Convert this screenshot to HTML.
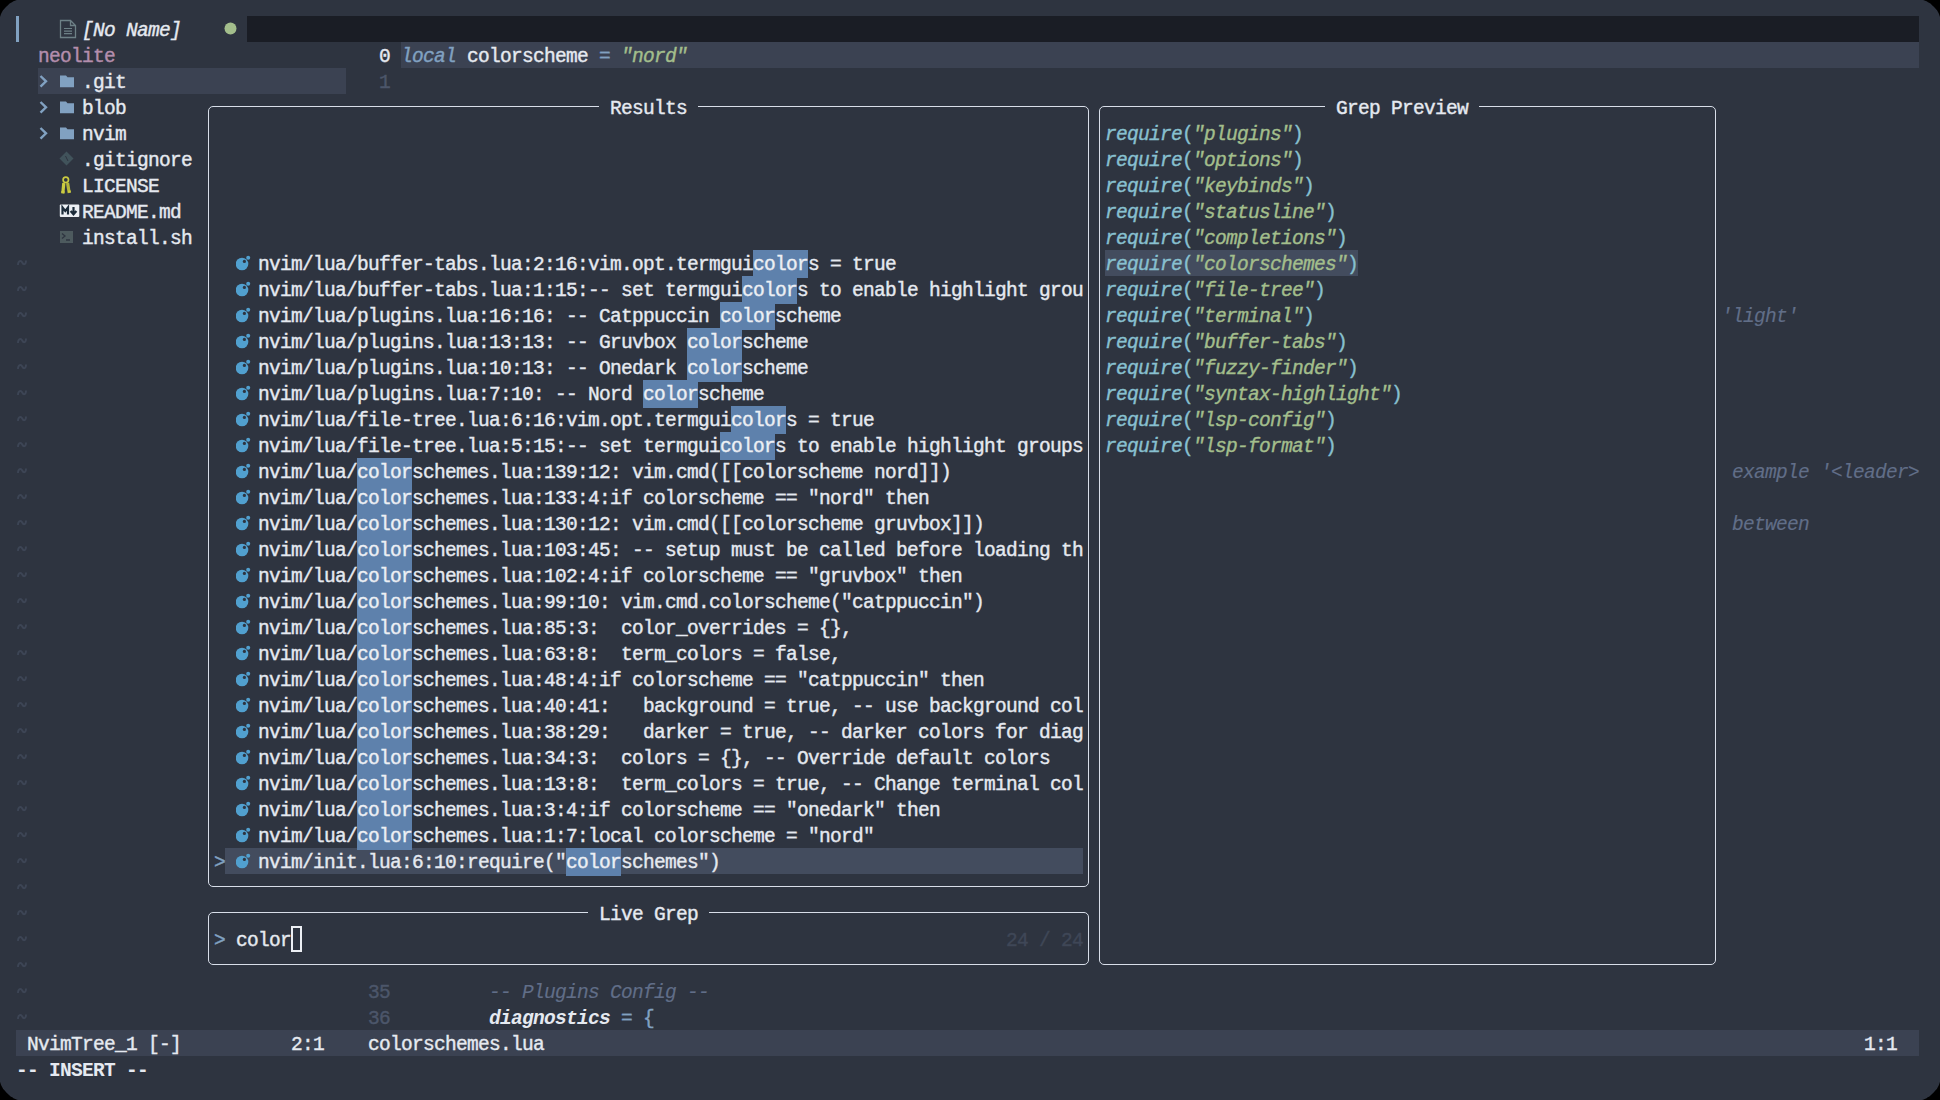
<!DOCTYPE html>
<html><head><meta charset="utf-8"><title>nvim</title><style>
html,body{margin:0;padding:0;width:1940px;height:1100px;overflow:hidden;background:#000}
#w{position:absolute;left:0;top:0;width:1940px;height:1100px;background:#2E3440;clip-path:polygon(0px 17px,1px 14px,2px 12.1px,3px 10.3px,4px 9.2px,5px 8.1px,6px 7px,7px 6.1px,8px 5.2px,9px 4.1px,10px 3.3px,11px 2.8px,12px 2.2px,13px 1.5px,14px 1.1px,15px 0.7px,16px 0.3px,17px 0px,1923px 0px,1924px 0.3px,1925px 0.7px,1926px 1.1px,1927px 1.5px,1928px 2.2px,1929px 2.8px,1930px 3.3px,1931px 4.1px,1932px 5.2px,1933px 6.1px,1934px 7px,1935px 8.1px,1936px 9.2px,1937px 10.3px,1938px 12.1px,1939px 14px,1940px 17px,1940px 1081.64px,1938.94px 1084.88px,1937.88px 1086.93px,1936.82px 1088.88px,1935.76px 1090.06px,1934.7px 1091.25px,1933.64px 1092.44px,1932.58px 1093.41px,1931.52px 1094.38px,1930.46px 1095.57px,1929.4px 1096.44px,1928.34px 1096.98px,1927.28px 1097.62px,1926.22px 1098.38px,1925.16px 1098.81px,1924.1px 1099.24px,1923.04px 1099.68px,1921.98px 1100px,18.02px 1100px,16.96px 1099.68px,15.9px 1099.24px,14.84px 1098.81px,13.78px 1098.38px,12.72px 1097.62px,11.66px 1096.98px,10.6px 1096.44px,9.54px 1095.57px,8.48px 1094.38px,7.42px 1093.41px,6.36px 1092.44px,5.3px 1091.25px,4.24px 1090.06px,3.18px 1088.88px,2.12px 1086.93px,1.06px 1084.88px,0px 1081.64px);overflow:hidden}
.r{position:absolute;display:block}
.t{position:absolute;height:26px;line-height:26px;font-family:"Liberation Mono",monospace;font-size:19.5px;letter-spacing:-0.702px;white-space:pre;-webkit-text-stroke:0.4px currentColor}
.i{font-style:italic}
.b{font-weight:bold;-webkit-text-stroke:0}
.c{-webkit-text-stroke:0.15px currentColor}
</style></head><body><div id="w">
<div class="r" style="left:16px;top:16px;width:3px;height:26px;background:#81A1C1;"></div>
<svg class="r" style="left:58px;top:18px" width="20" height="22" viewBox="0 0 20 22"><path d="M2.5 2.5 H12.5 L17.5 7.5 V19.5 H2.5 Z M12.5 2.5 V7.5 H17.5" fill="none" stroke="#6D8086" stroke-width="1.3"/><path d="M6 10.5H14M6 13.2H14M6 15.7H14" stroke="#6D8086" stroke-width="1.2"/></svg>
<div class="t i" style="left:82px;top:18px;color:#E5E9F0;">[No Name]</div>
<svg class="r" style="left:224px;top:22px" width="13" height="13" viewBox="0 0 13 13"><circle cx="6.5" cy="6.6" r="6" fill="#A3BE8C"/></svg>
<div class="r" style="left:247px;top:16px;width:1672px;height:26px;background:#1A1D25;"></div>
<div class="t" style="left:38px;top:44px;color:#B48EAD;">neolite</div>
<div class="r" style="left:38px;top:68px;width:308px;height:26px;background:#3B4252;"></div>
<svg class="r" style="left:38px;top:68px" width="12" height="26" viewBox="0 0 12 26"><path d="M2.5 8 L8 13.3 L2.5 18.6" fill="none" stroke="#81A1C1" stroke-width="2.4"/></svg>
<svg class="r" style="left:59px;top:68px" width="16" height="26" viewBox="0 0 16 26"><path d="M1 7.5 H7 L8.5 9.2 H15 V19.2 H1 Z" fill="#81A1C1"/></svg>
<div class="t" style="left:82px;top:70px;color:#E5E9F0;">.git</div>
<svg class="r" style="left:38px;top:94px" width="12" height="26" viewBox="0 0 12 26"><path d="M2.5 8 L8 13.3 L2.5 18.6" fill="none" stroke="#81A1C1" stroke-width="2.4"/></svg>
<svg class="r" style="left:59px;top:94px" width="16" height="26" viewBox="0 0 16 26"><path d="M1 7.5 H7 L8.5 9.2 H15 V19.2 H1 Z" fill="#81A1C1"/></svg>
<div class="t" style="left:82px;top:96px;color:#E5E9F0;">blob</div>
<svg class="r" style="left:38px;top:120px" width="12" height="26" viewBox="0 0 12 26"><path d="M2.5 8 L8 13.3 L2.5 18.6" fill="none" stroke="#81A1C1" stroke-width="2.4"/></svg>
<svg class="r" style="left:59px;top:120px" width="16" height="26" viewBox="0 0 16 26"><path d="M1 7.5 H7 L8.5 9.2 H15 V19.2 H1 Z" fill="#81A1C1"/></svg>
<div class="t" style="left:82px;top:122px;color:#E5E9F0;">nvim</div>
<svg class="r" style="left:58px;top:146px" width="17" height="26" viewBox="0 0 17 26"><path d="M8.5 5.5 L15.5 12.5 L8.5 19.5 L1.5 12.5 Z" fill="#41535B"/><path d="M7.5 10 L10 15" stroke="#2E3440" stroke-width="1"/></svg>
<div class="t" style="left:82px;top:148px;color:#E5E9F0;">.gitignore</div>
<svg class="r" style="left:58px;top:172px" width="16" height="26" viewBox="0 0 16 26"><circle cx="7.8" cy="7.8" r="2.7" fill="none" stroke="#CBCB41" stroke-width="1.7"/><path d="M5.8 11 L4.8 21.5" stroke="#CBCB41" stroke-width="3.2"/><path d="M9.6 11 L11.2 21" stroke="#B5B53A" stroke-width="3.2"/><path d="M3.4 20 H6.5 M10 19.5 H12.8" stroke="#CBCB41" stroke-width="1.8"/></svg>
<div class="t" style="left:82px;top:174px;color:#E5E9F0;">LICENSE</div>
<svg class="r" style="left:58px;top:198px" width="24" height="26" viewBox="0 0 24 26"><rect x="1.8" y="6.6" width="19.5" height="12.3" rx="1" fill="#ECEFF4"/><path d="M4.5 16.5 V9.5 L7.3 13 L10 9.5 V16.5" fill="none" stroke="#1c2b3a" stroke-width="2.2"/><path d="M15.5 9 V15.5 M12.6 13 L15.5 16.3 L18.4 13" fill="none" stroke="#1c2b3a" stroke-width="2.2"/></svg>
<div class="t" style="left:82px;top:200px;color:#E5E9F0;">README.md</div>
<svg class="r" style="left:58px;top:224px" width="17" height="26" viewBox="0 0 17 26"><rect x="2" y="7" width="13" height="12" fill="#4D5A5E"/><path d="M4 9.5 L7 12 L4 14.5 M8 16 H12" fill="none" stroke="#2E3440" stroke-width="1.3"/></svg>
<div class="t" style="left:82px;top:226px;color:#E5E9F0;">install.sh</div>
<svg class="r" style="left:16px;top:250px" width="11" height="26" viewBox="0 0 11 26"><path d="M2 15 C2 10.5, 5 10, 6.2 12.5 C7.4 15, 10 15, 10 10.5" fill="none" stroke="#3D4555" stroke-width="1.9"/></svg>
<svg class="r" style="left:16px;top:276px" width="11" height="26" viewBox="0 0 11 26"><path d="M2 15 C2 10.5, 5 10, 6.2 12.5 C7.4 15, 10 15, 10 10.5" fill="none" stroke="#3D4555" stroke-width="1.9"/></svg>
<svg class="r" style="left:16px;top:302px" width="11" height="26" viewBox="0 0 11 26"><path d="M2 15 C2 10.5, 5 10, 6.2 12.5 C7.4 15, 10 15, 10 10.5" fill="none" stroke="#3D4555" stroke-width="1.9"/></svg>
<svg class="r" style="left:16px;top:328px" width="11" height="26" viewBox="0 0 11 26"><path d="M2 15 C2 10.5, 5 10, 6.2 12.5 C7.4 15, 10 15, 10 10.5" fill="none" stroke="#3D4555" stroke-width="1.9"/></svg>
<svg class="r" style="left:16px;top:354px" width="11" height="26" viewBox="0 0 11 26"><path d="M2 15 C2 10.5, 5 10, 6.2 12.5 C7.4 15, 10 15, 10 10.5" fill="none" stroke="#3D4555" stroke-width="1.9"/></svg>
<svg class="r" style="left:16px;top:380px" width="11" height="26" viewBox="0 0 11 26"><path d="M2 15 C2 10.5, 5 10, 6.2 12.5 C7.4 15, 10 15, 10 10.5" fill="none" stroke="#3D4555" stroke-width="1.9"/></svg>
<svg class="r" style="left:16px;top:406px" width="11" height="26" viewBox="0 0 11 26"><path d="M2 15 C2 10.5, 5 10, 6.2 12.5 C7.4 15, 10 15, 10 10.5" fill="none" stroke="#3D4555" stroke-width="1.9"/></svg>
<svg class="r" style="left:16px;top:432px" width="11" height="26" viewBox="0 0 11 26"><path d="M2 15 C2 10.5, 5 10, 6.2 12.5 C7.4 15, 10 15, 10 10.5" fill="none" stroke="#3D4555" stroke-width="1.9"/></svg>
<svg class="r" style="left:16px;top:458px" width="11" height="26" viewBox="0 0 11 26"><path d="M2 15 C2 10.5, 5 10, 6.2 12.5 C7.4 15, 10 15, 10 10.5" fill="none" stroke="#3D4555" stroke-width="1.9"/></svg>
<svg class="r" style="left:16px;top:484px" width="11" height="26" viewBox="0 0 11 26"><path d="M2 15 C2 10.5, 5 10, 6.2 12.5 C7.4 15, 10 15, 10 10.5" fill="none" stroke="#3D4555" stroke-width="1.9"/></svg>
<svg class="r" style="left:16px;top:510px" width="11" height="26" viewBox="0 0 11 26"><path d="M2 15 C2 10.5, 5 10, 6.2 12.5 C7.4 15, 10 15, 10 10.5" fill="none" stroke="#3D4555" stroke-width="1.9"/></svg>
<svg class="r" style="left:16px;top:536px" width="11" height="26" viewBox="0 0 11 26"><path d="M2 15 C2 10.5, 5 10, 6.2 12.5 C7.4 15, 10 15, 10 10.5" fill="none" stroke="#3D4555" stroke-width="1.9"/></svg>
<svg class="r" style="left:16px;top:562px" width="11" height="26" viewBox="0 0 11 26"><path d="M2 15 C2 10.5, 5 10, 6.2 12.5 C7.4 15, 10 15, 10 10.5" fill="none" stroke="#3D4555" stroke-width="1.9"/></svg>
<svg class="r" style="left:16px;top:588px" width="11" height="26" viewBox="0 0 11 26"><path d="M2 15 C2 10.5, 5 10, 6.2 12.5 C7.4 15, 10 15, 10 10.5" fill="none" stroke="#3D4555" stroke-width="1.9"/></svg>
<svg class="r" style="left:16px;top:614px" width="11" height="26" viewBox="0 0 11 26"><path d="M2 15 C2 10.5, 5 10, 6.2 12.5 C7.4 15, 10 15, 10 10.5" fill="none" stroke="#3D4555" stroke-width="1.9"/></svg>
<svg class="r" style="left:16px;top:640px" width="11" height="26" viewBox="0 0 11 26"><path d="M2 15 C2 10.5, 5 10, 6.2 12.5 C7.4 15, 10 15, 10 10.5" fill="none" stroke="#3D4555" stroke-width="1.9"/></svg>
<svg class="r" style="left:16px;top:666px" width="11" height="26" viewBox="0 0 11 26"><path d="M2 15 C2 10.5, 5 10, 6.2 12.5 C7.4 15, 10 15, 10 10.5" fill="none" stroke="#3D4555" stroke-width="1.9"/></svg>
<svg class="r" style="left:16px;top:692px" width="11" height="26" viewBox="0 0 11 26"><path d="M2 15 C2 10.5, 5 10, 6.2 12.5 C7.4 15, 10 15, 10 10.5" fill="none" stroke="#3D4555" stroke-width="1.9"/></svg>
<svg class="r" style="left:16px;top:718px" width="11" height="26" viewBox="0 0 11 26"><path d="M2 15 C2 10.5, 5 10, 6.2 12.5 C7.4 15, 10 15, 10 10.5" fill="none" stroke="#3D4555" stroke-width="1.9"/></svg>
<svg class="r" style="left:16px;top:744px" width="11" height="26" viewBox="0 0 11 26"><path d="M2 15 C2 10.5, 5 10, 6.2 12.5 C7.4 15, 10 15, 10 10.5" fill="none" stroke="#3D4555" stroke-width="1.9"/></svg>
<svg class="r" style="left:16px;top:770px" width="11" height="26" viewBox="0 0 11 26"><path d="M2 15 C2 10.5, 5 10, 6.2 12.5 C7.4 15, 10 15, 10 10.5" fill="none" stroke="#3D4555" stroke-width="1.9"/></svg>
<svg class="r" style="left:16px;top:796px" width="11" height="26" viewBox="0 0 11 26"><path d="M2 15 C2 10.5, 5 10, 6.2 12.5 C7.4 15, 10 15, 10 10.5" fill="none" stroke="#3D4555" stroke-width="1.9"/></svg>
<svg class="r" style="left:16px;top:822px" width="11" height="26" viewBox="0 0 11 26"><path d="M2 15 C2 10.5, 5 10, 6.2 12.5 C7.4 15, 10 15, 10 10.5" fill="none" stroke="#3D4555" stroke-width="1.9"/></svg>
<svg class="r" style="left:16px;top:848px" width="11" height="26" viewBox="0 0 11 26"><path d="M2 15 C2 10.5, 5 10, 6.2 12.5 C7.4 15, 10 15, 10 10.5" fill="none" stroke="#3D4555" stroke-width="1.9"/></svg>
<svg class="r" style="left:16px;top:874px" width="11" height="26" viewBox="0 0 11 26"><path d="M2 15 C2 10.5, 5 10, 6.2 12.5 C7.4 15, 10 15, 10 10.5" fill="none" stroke="#3D4555" stroke-width="1.9"/></svg>
<svg class="r" style="left:16px;top:900px" width="11" height="26" viewBox="0 0 11 26"><path d="M2 15 C2 10.5, 5 10, 6.2 12.5 C7.4 15, 10 15, 10 10.5" fill="none" stroke="#3D4555" stroke-width="1.9"/></svg>
<svg class="r" style="left:16px;top:926px" width="11" height="26" viewBox="0 0 11 26"><path d="M2 15 C2 10.5, 5 10, 6.2 12.5 C7.4 15, 10 15, 10 10.5" fill="none" stroke="#3D4555" stroke-width="1.9"/></svg>
<svg class="r" style="left:16px;top:952px" width="11" height="26" viewBox="0 0 11 26"><path d="M2 15 C2 10.5, 5 10, 6.2 12.5 C7.4 15, 10 15, 10 10.5" fill="none" stroke="#3D4555" stroke-width="1.9"/></svg>
<svg class="r" style="left:16px;top:978px" width="11" height="26" viewBox="0 0 11 26"><path d="M2 15 C2 10.5, 5 10, 6.2 12.5 C7.4 15, 10 15, 10 10.5" fill="none" stroke="#3D4555" stroke-width="1.9"/></svg>
<svg class="r" style="left:16px;top:1004px" width="11" height="26" viewBox="0 0 11 26"><path d="M2 15 C2 10.5, 5 10, 6.2 12.5 C7.4 15, 10 15, 10 10.5" fill="none" stroke="#3D4555" stroke-width="1.9"/></svg>
<div class="t" style="left:379px;top:44px;color:#E5E9F0;">0</div>
<div class="r" style="left:401px;top:42px;width:1518px;height:26px;background:#3B4252;"></div>
<div class="t i" style="left:401px;top:44px;color:#81A1C1;">local</div>
<div class="t" style="left:467px;top:44px;color:#E5E9F0;">colorscheme</div>
<div class="t" style="left:599px;top:44px;color:#81A1C1;">=</div>
<div class="t i" style="left:621px;top:44px;color:#A3BE8C;">&quot;nord&quot;</div>
<div class="t" style="left:379px;top:70px;color:#4C566A;">1</div>
<div class="t i c" style="left:1721px;top:304px;color:#616E88;">&#x27;light&#x27;</div>
<div class="t i c" style="left:1732px;top:460px;color:#616E88;">example &#x27;&lt;leader&gt;</div>
<div class="t i c" style="left:1732px;top:512px;color:#616E88;">between</div>
<div class="t" style="left:368px;top:980px;color:#4C566A;">35</div>
<div class="t i c" style="left:489px;top:980px;color:#616E88;">-- Plugins Config --</div>
<div class="t" style="left:368px;top:1006px;color:#4C566A;">36</div>
<div class="t i b" style="left:489px;top:1006px;color:#E5E9F0;">diagnostics</div>
<div class="t" style="left:621px;top:1006px;color:#81A1C1;">=</div>
<div class="t" style="left:643px;top:1006px;color:#81A1C1;">{</div>
<div class="r" style="left:16px;top:1030px;width:1903px;height:26px;background:#3B4252;"></div>
<div class="t" style="left:27px;top:1032px;color:#E5E9F0;">NvimTree_1 [-]</div>
<div class="t" style="left:291px;top:1032px;color:#E5E9F0;">2:1</div>
<div class="t" style="left:368px;top:1032px;color:#E5E9F0;">colorschemes.lua</div>
<div class="t" style="left:1864px;top:1032px;color:#E5E9F0;">1:1</div>
<div class="t b" style="left:16px;top:1058px;color:#E5E9F0;">-- INSERT --</div>
<div class="r" style="left:208px;top:106px;width:881px;height:781px;box-sizing:border-box;border:1px solid #D8DEE9;border-radius:5px"></div>
<div class="r" style="left:208px;top:912px;width:881px;height:53px;box-sizing:border-box;border:1px solid #D8DEE9;border-radius:5px"></div>
<div class="r" style="left:1099px;top:106px;width:617px;height:859px;box-sizing:border-box;border:1px solid #D8DEE9;border-radius:5px"></div>
<div class="r" style="left:599px;top:100px;width:99px;height:14px;background:#2E3440;"></div>
<div class="t" style="left:610px;top:96px;color:#E5E9F0;">Results</div>
<div class="r" style="left:588px;top:906px;width:121px;height:14px;background:#2E3440;"></div>
<div class="t" style="left:599px;top:902px;color:#E5E9F0;">Live Grep</div>
<div class="r" style="left:1325px;top:100px;width:154px;height:14px;background:#2E3440;"></div>
<div class="t" style="left:1336px;top:96px;color:#E5E9F0;">Grep Preview</div>
<div class="r" style="left:225px;top:848px;width:858px;height:26px;background:#434C5E;"></div>
<div class="r" style="left:753px;top:250px;width:55px;height:26px;background:#5E81AC;"></div>
<svg class="r" style="left:236px;top:250px" width="16" height="26" viewBox="0 0 16 26"><circle cx="6" cy="14" r="6.3" fill="#51A0CF"/><circle cx="8.4" cy="11.4" r="1.6" fill="#2E3440"/><circle cx="12.2" cy="7.8" r="2" fill="#51A0CF"/></svg>
<div class="t" style="left:258px;top:252px;color:#E5E9F0;">nvim/lua/buffer-tabs.lua:2:16:vim.opt.termguicolors = true</div>
<div class="t" style="left:753px;top:252px;color:#ECEFF4;background:#5E81AC">color</div>
<div class="r" style="left:742px;top:276px;width:55px;height:26px;background:#5E81AC;"></div>
<svg class="r" style="left:236px;top:276px" width="16" height="26" viewBox="0 0 16 26"><circle cx="6" cy="14" r="6.3" fill="#51A0CF"/><circle cx="8.4" cy="11.4" r="1.6" fill="#2E3440"/><circle cx="12.2" cy="7.8" r="2" fill="#51A0CF"/></svg>
<div class="t" style="left:258px;top:278px;color:#E5E9F0;">nvim/lua/buffer-tabs.lua:1:15:-- set termguicolors to enable highlight grou</div>
<div class="t" style="left:742px;top:278px;color:#ECEFF4;background:#5E81AC">color</div>
<div class="r" style="left:720px;top:302px;width:55px;height:26px;background:#5E81AC;"></div>
<svg class="r" style="left:236px;top:302px" width="16" height="26" viewBox="0 0 16 26"><circle cx="6" cy="14" r="6.3" fill="#51A0CF"/><circle cx="8.4" cy="11.4" r="1.6" fill="#2E3440"/><circle cx="12.2" cy="7.8" r="2" fill="#51A0CF"/></svg>
<div class="t" style="left:258px;top:304px;color:#E5E9F0;">nvim/lua/plugins.lua:16:16: -- Catppuccin colorscheme</div>
<div class="t" style="left:720px;top:304px;color:#ECEFF4;background:#5E81AC">color</div>
<div class="r" style="left:687px;top:328px;width:55px;height:26px;background:#5E81AC;"></div>
<svg class="r" style="left:236px;top:328px" width="16" height="26" viewBox="0 0 16 26"><circle cx="6" cy="14" r="6.3" fill="#51A0CF"/><circle cx="8.4" cy="11.4" r="1.6" fill="#2E3440"/><circle cx="12.2" cy="7.8" r="2" fill="#51A0CF"/></svg>
<div class="t" style="left:258px;top:330px;color:#E5E9F0;">nvim/lua/plugins.lua:13:13: -- Gruvbox colorscheme</div>
<div class="t" style="left:687px;top:330px;color:#ECEFF4;background:#5E81AC">color</div>
<div class="r" style="left:687px;top:354px;width:55px;height:26px;background:#5E81AC;"></div>
<svg class="r" style="left:236px;top:354px" width="16" height="26" viewBox="0 0 16 26"><circle cx="6" cy="14" r="6.3" fill="#51A0CF"/><circle cx="8.4" cy="11.4" r="1.6" fill="#2E3440"/><circle cx="12.2" cy="7.8" r="2" fill="#51A0CF"/></svg>
<div class="t" style="left:258px;top:356px;color:#E5E9F0;">nvim/lua/plugins.lua:10:13: -- Onedark colorscheme</div>
<div class="t" style="left:687px;top:356px;color:#ECEFF4;background:#5E81AC">color</div>
<div class="r" style="left:643px;top:380px;width:55px;height:26px;background:#5E81AC;"></div>
<svg class="r" style="left:236px;top:380px" width="16" height="26" viewBox="0 0 16 26"><circle cx="6" cy="14" r="6.3" fill="#51A0CF"/><circle cx="8.4" cy="11.4" r="1.6" fill="#2E3440"/><circle cx="12.2" cy="7.8" r="2" fill="#51A0CF"/></svg>
<div class="t" style="left:258px;top:382px;color:#E5E9F0;">nvim/lua/plugins.lua:7:10: -- Nord colorscheme</div>
<div class="t" style="left:643px;top:382px;color:#ECEFF4;background:#5E81AC">color</div>
<div class="r" style="left:731px;top:406px;width:55px;height:26px;background:#5E81AC;"></div>
<svg class="r" style="left:236px;top:406px" width="16" height="26" viewBox="0 0 16 26"><circle cx="6" cy="14" r="6.3" fill="#51A0CF"/><circle cx="8.4" cy="11.4" r="1.6" fill="#2E3440"/><circle cx="12.2" cy="7.8" r="2" fill="#51A0CF"/></svg>
<div class="t" style="left:258px;top:408px;color:#E5E9F0;">nvim/lua/file-tree.lua:6:16:vim.opt.termguicolors = true</div>
<div class="t" style="left:731px;top:408px;color:#ECEFF4;background:#5E81AC">color</div>
<div class="r" style="left:720px;top:432px;width:55px;height:26px;background:#5E81AC;"></div>
<svg class="r" style="left:236px;top:432px" width="16" height="26" viewBox="0 0 16 26"><circle cx="6" cy="14" r="6.3" fill="#51A0CF"/><circle cx="8.4" cy="11.4" r="1.6" fill="#2E3440"/><circle cx="12.2" cy="7.8" r="2" fill="#51A0CF"/></svg>
<div class="t" style="left:258px;top:434px;color:#E5E9F0;">nvim/lua/file-tree.lua:5:15:-- set termguicolors to enable highlight groups</div>
<div class="t" style="left:720px;top:434px;color:#ECEFF4;background:#5E81AC">color</div>
<div class="r" style="left:357px;top:458px;width:55px;height:26px;background:#5E81AC;"></div>
<svg class="r" style="left:236px;top:458px" width="16" height="26" viewBox="0 0 16 26"><circle cx="6" cy="14" r="6.3" fill="#51A0CF"/><circle cx="8.4" cy="11.4" r="1.6" fill="#2E3440"/><circle cx="12.2" cy="7.8" r="2" fill="#51A0CF"/></svg>
<div class="t" style="left:258px;top:460px;color:#E5E9F0;">nvim/lua/colorschemes.lua:139:12: vim.cmd([[colorscheme nord]])</div>
<div class="t" style="left:357px;top:460px;color:#ECEFF4;background:#5E81AC">color</div>
<div class="r" style="left:357px;top:484px;width:55px;height:26px;background:#5E81AC;"></div>
<svg class="r" style="left:236px;top:484px" width="16" height="26" viewBox="0 0 16 26"><circle cx="6" cy="14" r="6.3" fill="#51A0CF"/><circle cx="8.4" cy="11.4" r="1.6" fill="#2E3440"/><circle cx="12.2" cy="7.8" r="2" fill="#51A0CF"/></svg>
<div class="t" style="left:258px;top:486px;color:#E5E9F0;">nvim/lua/colorschemes.lua:133:4:if colorscheme == &quot;nord&quot; then</div>
<div class="t" style="left:357px;top:486px;color:#ECEFF4;background:#5E81AC">color</div>
<div class="r" style="left:357px;top:510px;width:55px;height:26px;background:#5E81AC;"></div>
<svg class="r" style="left:236px;top:510px" width="16" height="26" viewBox="0 0 16 26"><circle cx="6" cy="14" r="6.3" fill="#51A0CF"/><circle cx="8.4" cy="11.4" r="1.6" fill="#2E3440"/><circle cx="12.2" cy="7.8" r="2" fill="#51A0CF"/></svg>
<div class="t" style="left:258px;top:512px;color:#E5E9F0;">nvim/lua/colorschemes.lua:130:12: vim.cmd([[colorscheme gruvbox]])</div>
<div class="t" style="left:357px;top:512px;color:#ECEFF4;background:#5E81AC">color</div>
<div class="r" style="left:357px;top:536px;width:55px;height:26px;background:#5E81AC;"></div>
<svg class="r" style="left:236px;top:536px" width="16" height="26" viewBox="0 0 16 26"><circle cx="6" cy="14" r="6.3" fill="#51A0CF"/><circle cx="8.4" cy="11.4" r="1.6" fill="#2E3440"/><circle cx="12.2" cy="7.8" r="2" fill="#51A0CF"/></svg>
<div class="t" style="left:258px;top:538px;color:#E5E9F0;">nvim/lua/colorschemes.lua:103:45: -- setup must be called before loading th</div>
<div class="t" style="left:357px;top:538px;color:#ECEFF4;background:#5E81AC">color</div>
<div class="r" style="left:357px;top:562px;width:55px;height:26px;background:#5E81AC;"></div>
<svg class="r" style="left:236px;top:562px" width="16" height="26" viewBox="0 0 16 26"><circle cx="6" cy="14" r="6.3" fill="#51A0CF"/><circle cx="8.4" cy="11.4" r="1.6" fill="#2E3440"/><circle cx="12.2" cy="7.8" r="2" fill="#51A0CF"/></svg>
<div class="t" style="left:258px;top:564px;color:#E5E9F0;">nvim/lua/colorschemes.lua:102:4:if colorscheme == &quot;gruvbox&quot; then</div>
<div class="t" style="left:357px;top:564px;color:#ECEFF4;background:#5E81AC">color</div>
<div class="r" style="left:357px;top:588px;width:55px;height:26px;background:#5E81AC;"></div>
<svg class="r" style="left:236px;top:588px" width="16" height="26" viewBox="0 0 16 26"><circle cx="6" cy="14" r="6.3" fill="#51A0CF"/><circle cx="8.4" cy="11.4" r="1.6" fill="#2E3440"/><circle cx="12.2" cy="7.8" r="2" fill="#51A0CF"/></svg>
<div class="t" style="left:258px;top:590px;color:#E5E9F0;">nvim/lua/colorschemes.lua:99:10: vim.cmd.colorscheme(&quot;catppuccin&quot;)</div>
<div class="t" style="left:357px;top:590px;color:#ECEFF4;background:#5E81AC">color</div>
<div class="r" style="left:357px;top:614px;width:55px;height:26px;background:#5E81AC;"></div>
<svg class="r" style="left:236px;top:614px" width="16" height="26" viewBox="0 0 16 26"><circle cx="6" cy="14" r="6.3" fill="#51A0CF"/><circle cx="8.4" cy="11.4" r="1.6" fill="#2E3440"/><circle cx="12.2" cy="7.8" r="2" fill="#51A0CF"/></svg>
<div class="t" style="left:258px;top:616px;color:#E5E9F0;">nvim/lua/colorschemes.lua:85:3:  color_overrides = {},</div>
<div class="t" style="left:357px;top:616px;color:#ECEFF4;background:#5E81AC">color</div>
<div class="r" style="left:357px;top:640px;width:55px;height:26px;background:#5E81AC;"></div>
<svg class="r" style="left:236px;top:640px" width="16" height="26" viewBox="0 0 16 26"><circle cx="6" cy="14" r="6.3" fill="#51A0CF"/><circle cx="8.4" cy="11.4" r="1.6" fill="#2E3440"/><circle cx="12.2" cy="7.8" r="2" fill="#51A0CF"/></svg>
<div class="t" style="left:258px;top:642px;color:#E5E9F0;">nvim/lua/colorschemes.lua:63:8:  term_colors = false,</div>
<div class="t" style="left:357px;top:642px;color:#ECEFF4;background:#5E81AC">color</div>
<div class="r" style="left:357px;top:666px;width:55px;height:26px;background:#5E81AC;"></div>
<svg class="r" style="left:236px;top:666px" width="16" height="26" viewBox="0 0 16 26"><circle cx="6" cy="14" r="6.3" fill="#51A0CF"/><circle cx="8.4" cy="11.4" r="1.6" fill="#2E3440"/><circle cx="12.2" cy="7.8" r="2" fill="#51A0CF"/></svg>
<div class="t" style="left:258px;top:668px;color:#E5E9F0;">nvim/lua/colorschemes.lua:48:4:if colorscheme == &quot;catppuccin&quot; then</div>
<div class="t" style="left:357px;top:668px;color:#ECEFF4;background:#5E81AC">color</div>
<div class="r" style="left:357px;top:692px;width:55px;height:26px;background:#5E81AC;"></div>
<svg class="r" style="left:236px;top:692px" width="16" height="26" viewBox="0 0 16 26"><circle cx="6" cy="14" r="6.3" fill="#51A0CF"/><circle cx="8.4" cy="11.4" r="1.6" fill="#2E3440"/><circle cx="12.2" cy="7.8" r="2" fill="#51A0CF"/></svg>
<div class="t" style="left:258px;top:694px;color:#E5E9F0;">nvim/lua/colorschemes.lua:40:41:   background = true, -- use background col</div>
<div class="t" style="left:357px;top:694px;color:#ECEFF4;background:#5E81AC">color</div>
<div class="r" style="left:357px;top:718px;width:55px;height:26px;background:#5E81AC;"></div>
<svg class="r" style="left:236px;top:718px" width="16" height="26" viewBox="0 0 16 26"><circle cx="6" cy="14" r="6.3" fill="#51A0CF"/><circle cx="8.4" cy="11.4" r="1.6" fill="#2E3440"/><circle cx="12.2" cy="7.8" r="2" fill="#51A0CF"/></svg>
<div class="t" style="left:258px;top:720px;color:#E5E9F0;">nvim/lua/colorschemes.lua:38:29:   darker = true, -- darker colors for diag</div>
<div class="t" style="left:357px;top:720px;color:#ECEFF4;background:#5E81AC">color</div>
<div class="r" style="left:357px;top:744px;width:55px;height:26px;background:#5E81AC;"></div>
<svg class="r" style="left:236px;top:744px" width="16" height="26" viewBox="0 0 16 26"><circle cx="6" cy="14" r="6.3" fill="#51A0CF"/><circle cx="8.4" cy="11.4" r="1.6" fill="#2E3440"/><circle cx="12.2" cy="7.8" r="2" fill="#51A0CF"/></svg>
<div class="t" style="left:258px;top:746px;color:#E5E9F0;">nvim/lua/colorschemes.lua:34:3:  colors = {}, -- Override default colors</div>
<div class="t" style="left:357px;top:746px;color:#ECEFF4;background:#5E81AC">color</div>
<div class="r" style="left:357px;top:770px;width:55px;height:26px;background:#5E81AC;"></div>
<svg class="r" style="left:236px;top:770px" width="16" height="26" viewBox="0 0 16 26"><circle cx="6" cy="14" r="6.3" fill="#51A0CF"/><circle cx="8.4" cy="11.4" r="1.6" fill="#2E3440"/><circle cx="12.2" cy="7.8" r="2" fill="#51A0CF"/></svg>
<div class="t" style="left:258px;top:772px;color:#E5E9F0;">nvim/lua/colorschemes.lua:13:8:  term_colors = true, -- Change terminal col</div>
<div class="t" style="left:357px;top:772px;color:#ECEFF4;background:#5E81AC">color</div>
<div class="r" style="left:357px;top:796px;width:55px;height:26px;background:#5E81AC;"></div>
<svg class="r" style="left:236px;top:796px" width="16" height="26" viewBox="0 0 16 26"><circle cx="6" cy="14" r="6.3" fill="#51A0CF"/><circle cx="8.4" cy="11.4" r="1.6" fill="#2E3440"/><circle cx="12.2" cy="7.8" r="2" fill="#51A0CF"/></svg>
<div class="t" style="left:258px;top:798px;color:#E5E9F0;">nvim/lua/colorschemes.lua:3:4:if colorscheme == &quot;onedark&quot; then</div>
<div class="t" style="left:357px;top:798px;color:#ECEFF4;background:#5E81AC">color</div>
<div class="r" style="left:357px;top:822px;width:55px;height:26px;background:#5E81AC;"></div>
<svg class="r" style="left:236px;top:822px" width="16" height="26" viewBox="0 0 16 26"><circle cx="6" cy="14" r="6.3" fill="#51A0CF"/><circle cx="8.4" cy="11.4" r="1.6" fill="#2E3440"/><circle cx="12.2" cy="7.8" r="2" fill="#51A0CF"/></svg>
<div class="t" style="left:258px;top:824px;color:#E5E9F0;">nvim/lua/colorschemes.lua:1:7:local colorscheme = &quot;nord&quot;</div>
<div class="t" style="left:357px;top:824px;color:#ECEFF4;background:#5E81AC">color</div>
<div class="r" style="left:566px;top:848px;width:55px;height:26px;background:#5E81AC;"></div>
<svg class="r" style="left:236px;top:848px" width="16" height="26" viewBox="0 0 16 26"><circle cx="6" cy="14" r="6.3" fill="#51A0CF"/><circle cx="8.4" cy="11.4" r="1.6" fill="#2E3440"/><circle cx="12.2" cy="7.8" r="2" fill="#51A0CF"/></svg>
<div class="t" style="left:258px;top:850px;color:#E5E9F0;">nvim/init.lua:6:10:require(&quot;colorschemes&quot;)</div>
<div class="t" style="left:566px;top:850px;color:#ECEFF4;background:#5E81AC">color</div>
<div class="t" style="left:214px;top:850px;color:#81A1C1;">&gt;</div>
<div class="t" style="left:214px;top:928px;color:#81A1C1;">&gt;</div>
<div class="t" style="left:236px;top:928px;color:#E5E9F0;">color</div>
<div class="r" style="left:291px;top:926px;width:11px;height:26px;background:transparent;box-sizing:border-box;border:2px solid #ECEFF4"></div>
<div class="t" style="left:1006px;top:928px;color:#3F4757;">24 / 24</div>
<div class="r" style="left:1105px;top:250px;width:253px;height:26px;background:#434C5E;"></div>
<div class="t i" style="left:1105px;top:122px;color:#88C0D0;">require</div>
<div class="t" style="left:1182px;top:122px;color:#88C0D0;">(</div>
<div class="t i" style="left:1193px;top:122px;color:#A3BE8C;">&quot;plugins&quot;</div>
<div class="t" style="left:1292px;top:122px;color:#88C0D0;">)</div>
<div class="t i" style="left:1105px;top:148px;color:#88C0D0;">require</div>
<div class="t" style="left:1182px;top:148px;color:#88C0D0;">(</div>
<div class="t i" style="left:1193px;top:148px;color:#A3BE8C;">&quot;options&quot;</div>
<div class="t" style="left:1292px;top:148px;color:#88C0D0;">)</div>
<div class="t i" style="left:1105px;top:174px;color:#88C0D0;">require</div>
<div class="t" style="left:1182px;top:174px;color:#88C0D0;">(</div>
<div class="t i" style="left:1193px;top:174px;color:#A3BE8C;">&quot;keybinds&quot;</div>
<div class="t" style="left:1303px;top:174px;color:#88C0D0;">)</div>
<div class="t i" style="left:1105px;top:200px;color:#88C0D0;">require</div>
<div class="t" style="left:1182px;top:200px;color:#88C0D0;">(</div>
<div class="t i" style="left:1193px;top:200px;color:#A3BE8C;">&quot;statusline&quot;</div>
<div class="t" style="left:1325px;top:200px;color:#88C0D0;">)</div>
<div class="t i" style="left:1105px;top:226px;color:#88C0D0;">require</div>
<div class="t" style="left:1182px;top:226px;color:#88C0D0;">(</div>
<div class="t i" style="left:1193px;top:226px;color:#A3BE8C;">&quot;completions&quot;</div>
<div class="t" style="left:1336px;top:226px;color:#88C0D0;">)</div>
<div class="t i" style="left:1105px;top:252px;color:#88C0D0;">require</div>
<div class="t" style="left:1182px;top:252px;color:#88C0D0;">(</div>
<div class="t i" style="left:1193px;top:252px;color:#A3BE8C;">&quot;colorschemes&quot;</div>
<div class="t" style="left:1347px;top:252px;color:#88C0D0;">)</div>
<div class="t i" style="left:1105px;top:278px;color:#88C0D0;">require</div>
<div class="t" style="left:1182px;top:278px;color:#88C0D0;">(</div>
<div class="t i" style="left:1193px;top:278px;color:#A3BE8C;">&quot;file-tree&quot;</div>
<div class="t" style="left:1314px;top:278px;color:#88C0D0;">)</div>
<div class="t i" style="left:1105px;top:304px;color:#88C0D0;">require</div>
<div class="t" style="left:1182px;top:304px;color:#88C0D0;">(</div>
<div class="t i" style="left:1193px;top:304px;color:#A3BE8C;">&quot;terminal&quot;</div>
<div class="t" style="left:1303px;top:304px;color:#88C0D0;">)</div>
<div class="t i" style="left:1105px;top:330px;color:#88C0D0;">require</div>
<div class="t" style="left:1182px;top:330px;color:#88C0D0;">(</div>
<div class="t i" style="left:1193px;top:330px;color:#A3BE8C;">&quot;buffer-tabs&quot;</div>
<div class="t" style="left:1336px;top:330px;color:#88C0D0;">)</div>
<div class="t i" style="left:1105px;top:356px;color:#88C0D0;">require</div>
<div class="t" style="left:1182px;top:356px;color:#88C0D0;">(</div>
<div class="t i" style="left:1193px;top:356px;color:#A3BE8C;">&quot;fuzzy-finder&quot;</div>
<div class="t" style="left:1347px;top:356px;color:#88C0D0;">)</div>
<div class="t i" style="left:1105px;top:382px;color:#88C0D0;">require</div>
<div class="t" style="left:1182px;top:382px;color:#88C0D0;">(</div>
<div class="t i" style="left:1193px;top:382px;color:#A3BE8C;">&quot;syntax-highlight&quot;</div>
<div class="t" style="left:1391px;top:382px;color:#88C0D0;">)</div>
<div class="t i" style="left:1105px;top:408px;color:#88C0D0;">require</div>
<div class="t" style="left:1182px;top:408px;color:#88C0D0;">(</div>
<div class="t i" style="left:1193px;top:408px;color:#A3BE8C;">&quot;lsp-config&quot;</div>
<div class="t" style="left:1325px;top:408px;color:#88C0D0;">)</div>
<div class="t i" style="left:1105px;top:434px;color:#88C0D0;">require</div>
<div class="t" style="left:1182px;top:434px;color:#88C0D0;">(</div>
<div class="t i" style="left:1193px;top:434px;color:#A3BE8C;">&quot;lsp-format&quot;</div>
<div class="t" style="left:1325px;top:434px;color:#88C0D0;">)</div>
</div></body></html>
